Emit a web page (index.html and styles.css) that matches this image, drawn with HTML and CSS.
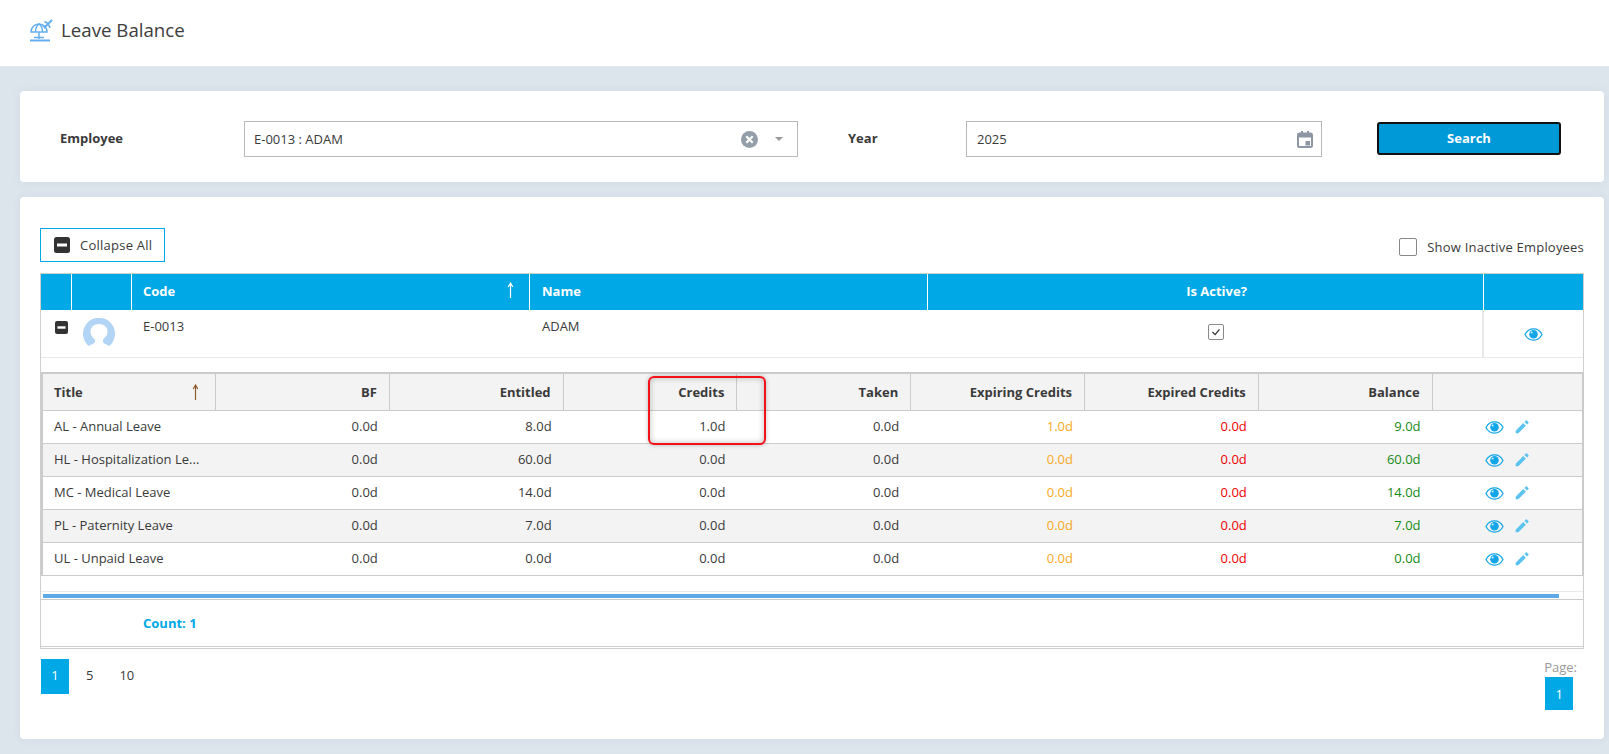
FILE: index.html
```html
<!DOCTYPE html>
<html lang="en">
<head>
<meta charset="utf-8">
<title>Leave Balance</title>
<link rel="stylesheet" href="styles.css">
</head>
<body>
<svg class="defs" width="0" height="0">
  <symbol id="eye" viewBox="0 0 20 14">
    <path d="M.8 7C2.800 3.200 6 1 10 1s7.200 2.200 9.200 6C17.200 10.800 14 13 10 13S2.800 10.800.8 7z" fill="none" stroke="currentColor" stroke-width="1.300"/>
    <circle cx="10" cy="6.800" r="4.600" fill="currentColor"/>
    <circle cx="8" cy="4.800" r="1.100" fill="#cfefff"/>
  </symbol>
  <symbol id="pencil" viewBox="0 0 24 24">
    <path d="M21.500 6.500c.6-.6.600-1.500 0-2.100l-1.900-1.900c-.6-.6-1.500-.6-2.100 0l-1.900 1.900 4 4zM2.500 17.500v4h4L17.800 10.100l-4-4z" fill="currentColor"/>
  </symbol>
  <symbol id="minus" viewBox="0 0 16 16">
    <rect width="16" height="16" rx="2.500" fill="#333"/>
    <rect x="3" y="6.500" width="10" height="3" fill="#fff"/>
  </symbol>
  <symbol id="arrow" viewBox="0 0 7 16">
    <path d="M3.500 16V1M1.200 5L3.500 1 5.800 5" fill="none" stroke="currentColor" stroke-width="1.200"/>
  </symbol>
</svg>

<header class="topbar">
  <svg class="logo" viewBox="0 0 24 24" width="24" height="24" fill="none" stroke="#64aef0" stroke-width="1.500">
    <path d="M2 14a8 8 0 0 1 16 0z"/>
    <path d="M6.500 14c0-4 1.500-6.500 3.500-8 2 1.500 3.500 4 3.500 8M10 14v7M5 19.500h10"/>
    <path d="M1 22.500h20" stroke-width="2"/>
    <path d="M15 10L23 2" stroke-width="2"/>
    <path d="M19 5.500L15.500 3.500M19.500 6.500L21 10M15.500 8.500L13.500 7.500" stroke-width="1.600"/>
  </svg>
  <h1 class="page-title">Leave Balance</h1>
</header>

<main class="content">
  <section class="card filter-card">
    <label class="filter-label employee-label">Employee</label>
    <div class="field employee-field">
      <span class="field-text">E-0013 : ADAM</span>
      <svg class="clear-icon" viewBox="0 0 17 17" width="17" height="17"><circle cx="8.500" cy="8.500" r="8.500" fill="#949ea9"/><path d="M5.300 5.300l6.400 6.400M11.700 5.300l-6.400 6.400" stroke="#fff" stroke-width="2.200"/></svg>
      <span class="caret"></span>
    </div>
    <label class="filter-label year-label">Year</label>
    <div class="field year-field">
      <span class="field-text">2025</span>
      <svg class="cal-icon" viewBox="0 0 16 17" width="16" height="17"><rect x="1" y="2.500" width="14" height="13.500" rx="1.500" fill="#fff" stroke="#8c97a3" stroke-width="2"/><path d="M1 2.500h14v4H1z" fill="#8c97a3"/><path d="M4 0h2v3H4zM10 0h2v3h-2z" fill="#8c97a3"/><rect x="8.500" y="10" width="4.500" height="4.500" fill="#8c97a3"/></svg>
    </div>
    <button class="search-btn" type="button">Search</button>
  </section>

  <section class="card grid-card">
    <div class="toolbar">
      <button class="collapse-btn" type="button"><svg class="minus-lg"><use href="#minus"/></svg>Collapse All</button>
      <label class="inactive"><span class="checkbox"></span>Show Inactive Employees</label>
    </div>

    <div class="master">
      <div class="master-row master-head">
        <div class="mcell"></div>
        <div class="mcell"></div>
        <div class="mcell pad code sort">Code<svg class="arrow white"><use href="#arrow"/></svg></div>
        <div class="mcell pad">Name</div>
        <div class="mcell center">Is Active?</div>
        <div class="mcell"></div>
      </div>
      <div class="master-row master-body">
        <div class="bcell toggle"><svg class="minus-sm"><use href="#minus"/></svg></div>
        <div class="bcell avatar-cell">
          <svg class="avatar" viewBox="0 0 32 28" width="32" height="28"><path d="M5.700 28A16 16 0 1 1 26.300 28L20.500 25C19.800 24 19.800 22.500 20.300 21 23 19 24.500 16.500 24.500 13.500 24.500 9 21 6 16 6S7.500 9 7.500 13.500C7.500 16.500 9 19 11.700 21 12.200 22.500 12.200 24 11.500 25z" fill="#b3d5f5"/></svg>
        </div>
        <div class="bcell pad code">E-0013</div>
        <div class="bcell pad">ADAM</div>
        <div class="bcell check-cell"><span class="tick"><svg viewBox="0 0 16 16" width="14" height="14"><path d="M4 8l3 3 5-6" fill="none" stroke="#333" stroke-width="1.500"/></svg></span></div>
        <div class="bcell eye-cell"><svg class="eye"><use href="#eye"/></svg></div>
      </div>

      <div class="detail-wrap">
        <div class="detail">
          <div class="drow dhead">
            <div class="dcell left sort">Title<svg class="arrow brown"><use href="#arrow"/></svg></div>
            <div class="dcell">BF</div>
            <div class="dcell">Entitled</div>
            <div class="dcell">Credits</div>
            <div class="dcell">Taken</div>
            <div class="dcell">Expiring Credits</div>
            <div class="dcell">Expired Credits</div>
            <div class="dcell">Balance</div>
            <div class="dcell"></div>
          </div>
          <div class="drow">
            <div class="dcell left">AL - Annual Leave</div>
            <div class="dcell">0.0d</div><div class="dcell">8.0d</div><div class="dcell">1.0d</div><div class="dcell">0.0d</div>
            <div class="dcell orange">1.0d</div><div class="dcell red">0.0d</div><div class="dcell green">9.0d</div>
            <div class="dcell actions"><svg class="eye"><use href="#eye"/></svg><svg class="pencil"><use href="#pencil"/></svg></div>
          </div>
          <div class="drow">
            <div class="dcell left">HL - Hospitalization Le...</div>
            <div class="dcell">0.0d</div><div class="dcell">60.0d</div><div class="dcell">0.0d</div><div class="dcell">0.0d</div>
            <div class="dcell orange">0.0d</div><div class="dcell red">0.0d</div><div class="dcell green">60.0d</div>
            <div class="dcell actions"><svg class="eye"><use href="#eye"/></svg><svg class="pencil"><use href="#pencil"/></svg></div>
          </div>
          <div class="drow">
            <div class="dcell left">MC - Medical Leave</div>
            <div class="dcell">0.0d</div><div class="dcell">14.0d</div><div class="dcell">0.0d</div><div class="dcell">0.0d</div>
            <div class="dcell orange">0.0d</div><div class="dcell red">0.0d</div><div class="dcell green">14.0d</div>
            <div class="dcell actions"><svg class="eye"><use href="#eye"/></svg><svg class="pencil"><use href="#pencil"/></svg></div>
          </div>
          <div class="drow">
            <div class="dcell left">PL - Paternity Leave</div>
            <div class="dcell">0.0d</div><div class="dcell">7.0d</div><div class="dcell">0.0d</div><div class="dcell">0.0d</div>
            <div class="dcell orange">0.0d</div><div class="dcell red">0.0d</div><div class="dcell green">7.0d</div>
            <div class="dcell actions"><svg class="eye"><use href="#eye"/></svg><svg class="pencil"><use href="#pencil"/></svg></div>
          </div>
          <div class="drow">
            <div class="dcell left">UL - Unpaid Leave</div>
            <div class="dcell">0.0d</div><div class="dcell">0.0d</div><div class="dcell">0.0d</div><div class="dcell">0.0d</div>
            <div class="dcell orange">0.0d</div><div class="dcell red">0.0d</div><div class="dcell green">0.0d</div>
            <div class="dcell actions"><svg class="eye"><use href="#eye"/></svg><svg class="pencil"><use href="#pencil"/></svg></div>
          </div>
        </div>
        <div class="callout"></div>
      </div>

      <div class="scroll-zone"><div class="scroll-bar"></div></div>
      <div class="count-row">Count: 1</div>
    </div>

    <div class="pager">
      <div class="sizes">
        <span class="size active">1</span>
        <span class="size">5</span>
        <span class="size">10</span>
      </div>
      <div class="pages">
        <span class="page-label">Page:</span>
        <span class="page-num">1</span>
      </div>
    </div>
  </section>
</main>
</body>
</html>
```
FILE: styles.css
```css
* { box-sizing: border-box; }
html, body { margin: 0; height: 100%; }
body {
  width: 1609px;
  height: 754px;
  overflow: hidden;
  background: #dce4ec;
  font-family: "Open Sans", "Noto Sans", sans-serif;
  font-size: 13px;
  color: #3a3a3a;
}
.defs { position: absolute; }

.topbar {
  height: 67px;
  background: #fff;
  display: flex;
  align-items: center;
  padding: 0 0 7px 29px;
  border-bottom: 1px solid #e3e8ee;
}
.logo { margin-right: 8px; }
.page-title { margin: 0; font-size: 18.7px; font-weight: 400; color: #3d3d3d; }

.content { padding: 24px 5px 0 20px; }
.card { background: #fff; border-radius: 4px; box-shadow: 0 0 8px rgba(170,185,200,.18); }

.filter-card {
  height: 91px;
  display: flex;
  align-items: center;
  padding-top: 5px;
  margin-bottom: 15px;
}
.filter-label { font-weight: 700; color: #3a3a3a; margin-top: -2px; }
.employee-label { margin-left: 40px; width: 184px; }
.year-label { margin-left: 50px; width: 118px; }
.field {
  height: 36px;
  border: 1px solid #b9b9b9;
  display: flex;
  align-items: center;
  padding-left: 10px;
}
.employee-field { width: 554px; padding-left: 9px; }
.year-field { width: 356px; }
.field-text { flex: 1; }
.clear-icon { margin-right: 17px; }
.caret {
  width: 0; height: 0;
  border-left: 4px solid transparent;
  border-right: 4px solid transparent;
  border-top: 4px solid #999;
  margin-right: 14px;
}
.cal-icon { margin-right: 8px; }
.search-btn {
  margin-left: 55px;
  margin-top: -2px;
  width: 184px;
  height: 33px;
  background: #0099d8;
  border: 2px solid #111;
  border-radius: 3px;
  color: #fff;
  font: 700 13px "Open Sans", "Noto Sans", sans-serif;
}

.grid-card {
  height: 542px;
  padding: 31px 20px 0 20px;
}
.toolbar {
  display: flex;
  justify-content: space-between;
  align-items: flex-start;
  height: 45px;
}
.collapse-btn {
  width: 125px;
  height: 34px;
  background: #fff;
  border: 1px solid #00a8e6;
  display: flex;
  align-items: center;
  padding: 0 0 0 13px;
  font: 400 13px "Open Sans", "Noto Sans", sans-serif;
  letter-spacing: .25px;
  color: #3a3a3a;
}
.minus-lg { width: 16px; height: 16px; margin-right: 10px; }
.inactive { display: flex; align-items: center; margin-top: 10px; gap: 10px; letter-spacing: .2px; }
.checkbox {
  width: 18px; height: 18px;
  border: 1px solid #888;
  border-radius: 2px;
}

.master {
  width: 1544px;
  border: 1px solid #cfcfcf;
  border-bottom: 3px double #cfcfcf;
}
.master-row {
  display: grid;
  grid-template-columns: 31px 60px 398px 398px 556px 1fr;
}
.master-head {
  height: 36px;
  background: #00a8e6;
  color: #fff;
  font-weight: 700;
}
.mcell {
  display: flex;
  align-items: center;
  border-right: 1px solid #fff;
  padding-bottom: 2px;
}
.mcell:last-child { border-right: 0; }
.pad { padding-left: 12px; }
.pad.code { padding-left: 11px; }
.center { justify-content: center; padding-left: 22px; }
.sort { position: relative; }
.arrow { position: absolute; width: 7px; height: 16px; }
.arrow.white { right: 15px; top: 8px; color: #fff; }
.arrow.brown { right: 16px; top: 10px; color: #8f5a2a; }

.master-body {
  height: 48px;
  border-bottom: 1px solid #e8e8e8;
}
.bcell { padding-top: 7px; }
.toggle { padding: 11px 0 0 14px; }
.minus-sm { width: 13px; height: 13px; display: block; }
.avatar-cell { padding: 8px 0 0 11px; }
.avatar { display: block; }
.check-cell { display: flex; justify-content: center; padding: 14px 0 0 22px; border-right: 2px solid #e8e8e8; }
.tick {
  width: 16px; height: 16px;
  border: 1px solid #888;
  border-radius: 2px;
  display: flex; align-items: center; justify-content: center;
}
.eye-cell { display: flex; justify-content: center; padding-top: 18px; }
.eye { width: 19px; height: 13px; color: #12a5e8; display: block; }
.pencil { width: 16px; height: 16px; color: #5cc3ef; display: block; margin-left: 10px; }

.detail-wrap { position: relative; padding: 14px 0 15px 0; border-bottom: 1px solid #eaeaea; }
.detail {
  border-top: 2px solid #cbcbcb;
  border-left: 2px solid #cbcbcb;
  border-right: 2px solid #cbcbcb;
  margin: 0 -1px 0 0;
  border-bottom: 1px solid #cbcbcb;
}
.drow {
  display: grid;
  grid-template-columns: 173px repeat(7, 173.8px) 1fr;
  height: 33px;
  border-top: 1px solid #cbcbcb;
  align-items: center;
}
.drow:nth-child(odd) { background: #f3f3f3; }
.dhead {
  height: 36px;
  border-top: 0;
  background: #f3f3f3;
  font-weight: 700;
  align-items: stretch;
}
.dcell {
  text-align: right;
  padding: 0 12px 2px;
  white-space: nowrap;
}
.dhead .dcell {
  display: flex;
  align-items: center;
  justify-content: flex-end;
  border-right: 1px solid #cbcbcb;
  padding-bottom: 0;
}
.dhead .dcell:last-child { border-right: 0; }
.dhead .dcell.left { justify-content: flex-start; }
.dcell.left { text-align: left; padding-left: 11px; }
.orange { color: #f9a825; }
.red { color: #ee0000; }
.green { color: #158a15; }
.actions { display: flex; align-items: center; padding: 0 0 0 52px; }

.callout {
  position: absolute;
  left: 607px;
  top: 18px;
  width: 118px;
  height: 69px;
  border: 2px solid #f5111a;
  border-radius: 6px;
  box-shadow: inset 0 0 6px rgba(0,0,0,.25), 0 0 4px rgba(0,0,0,.25);
}

.scroll-zone {
  height: 8px;
  padding: 2px 24px 0 2px;
  border-bottom: 1px solid #cbcbcb;
}
.scroll-bar { height: 4px; background: #5ea9e6; }
.count-row {
  height: 46px;
  padding: 14px 0 0 102px;
  color: #00a8e6;
  font-weight: 700;
}

.pager {
  display: flex;
  justify-content: space-between;
  margin-top: 10px;
  width: 1544px;
}
.sizes { display: flex; padding-left: 1px; }
.size {
  height: 35px;
  padding: 0 10px 3px;
  display: flex; align-items: center; justify-content: center;
  margin-right: 6px;
}
.size.active { width: 28px; background: #00a8e6; color: #fff; margin-right: 7px; }
.pages { display: flex; flex-direction: column; align-items: flex-start; padding-right: 7px; }
.page-label { color: #999; height: 18px; line-height: 16px; margin-left: -1px; }
.page-num {
  width: 28px; height: 33px;
  background: #00a8e6; color: #fff;
  display: flex; align-items: center; justify-content: center;
}
```
